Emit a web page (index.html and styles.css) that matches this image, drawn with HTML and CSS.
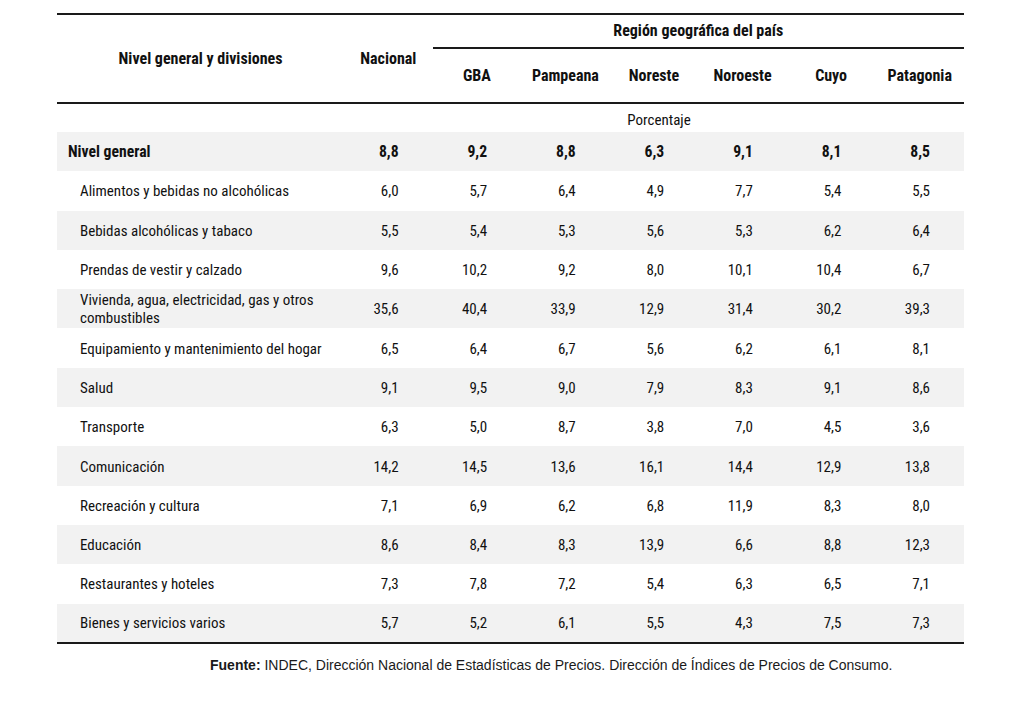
FILE: index.html
```html
<!DOCTYPE html>
<html lang="es">
<head>
<meta charset="utf-8">
<title>Ponderaciones por región</title>
<link rel="stylesheet" href="styles.css">
</head>
<body>
<main class="page">
  <table class="tbl">
    <colgroup>
      <col class="c-label">
      <col class="c-num"><col class="c-num"><col class="c-num"><col class="c-num">
      <col class="c-num"><col class="c-num"><col class="c-num">
    </colgroup>
    <thead>
      <tr class="h1">
        <th rowspan="2" class="th-main">Nivel general y divisiones</th>
        <th rowspan="2" class="th-main">Nacional</th>
        <th colspan="6" class="th-region">Región geográfica del país</th>
      </tr>
      <tr class="h2">
        <th>GBA</th><th>Pampeana</th><th>Noreste</th><th>Noroeste</th><th>Cuyo</th><th>Patagonia</th>
      </tr>
    </thead>
    <tbody>
      <tr class="unit"><td></td><td colspan="7" class="unit-cell">Porcentaje</td></tr>
      <tr class="row alt total"><td class="lbl lbl-top">Nivel general</td><td>8,8</td><td>9,2</td><td>8,8</td><td>6,3</td><td>9,1</td><td>8,1</td><td>8,5</td></tr>
      <tr class="row"><td class="lbl">Alimentos y bebidas no alcohólicas</td><td>6,0</td><td>5,7</td><td>6,4</td><td>4,9</td><td>7,7</td><td>5,4</td><td>5,5</td></tr>
      <tr class="row alt"><td class="lbl">Bebidas alcohólicas y tabaco</td><td>5,5</td><td>5,4</td><td>5,3</td><td>5,6</td><td>5,3</td><td>6,2</td><td>6,4</td></tr>
      <tr class="row"><td class="lbl">Prendas de vestir y calzado</td><td>9,6</td><td>10,2</td><td>9,2</td><td>8,0</td><td>10,1</td><td>10,4</td><td>6,7</td></tr>
      <tr class="row alt"><td class="lbl">Vivienda, agua, electricidad, gas y otros combustibles</td><td>35,6</td><td>40,4</td><td>33,9</td><td>12,9</td><td>31,4</td><td>30,2</td><td>39,3</td></tr>
      <tr class="row"><td class="lbl">Equipamiento y mantenimiento del hogar</td><td>6,5</td><td>6,4</td><td>6,7</td><td>5,6</td><td>6,2</td><td>6,1</td><td>8,1</td></tr>
      <tr class="row alt"><td class="lbl">Salud</td><td>9,1</td><td>9,5</td><td>9,0</td><td>7,9</td><td>8,3</td><td>9,1</td><td>8,6</td></tr>
      <tr class="row"><td class="lbl">Transporte</td><td>6,3</td><td>5,0</td><td>8,7</td><td>3,8</td><td>7,0</td><td>4,5</td><td>3,6</td></tr>
      <tr class="row alt"><td class="lbl">Comunicación</td><td>14,2</td><td>14,5</td><td>13,6</td><td>16,1</td><td>14,4</td><td>12,9</td><td>13,8</td></tr>
      <tr class="row"><td class="lbl">Recreación y cultura</td><td>7,1</td><td>6,9</td><td>6,2</td><td>6,8</td><td>11,9</td><td>8,3</td><td>8,0</td></tr>
      <tr class="row alt"><td class="lbl">Educación</td><td>8,6</td><td>8,4</td><td>8,3</td><td>13,9</td><td>6,6</td><td>8,8</td><td>12,3</td></tr>
      <tr class="row"><td class="lbl">Restaurantes y hoteles</td><td>7,3</td><td>7,8</td><td>7,2</td><td>5,4</td><td>6,3</td><td>6,5</td><td>7,1</td></tr>
      <tr class="row alt last"><td class="lbl">Bienes y servicios varios</td><td>5,7</td><td>5,2</td><td>6,1</td><td>5,5</td><td>4,3</td><td>7,5</td><td>7,3</td></tr>
    </tbody>
  </table>
  <p class="source"><strong>Fuente:</strong> INDEC, Dirección Nacional de Estadísticas de Precios. Dirección de Índices de Precios de Consumo.</p>
</main>
</body>
</html>
```
FILE: styles.css
```css
html, body {
  margin: 0;
  padding: 0;
  background: #ffffff;
}

.page {
  padding: 13px 0 0 57px;
}

.tbl {
  width: 907px;
  table-layout: fixed;
  border-collapse: collapse;
  font-family: "Roboto Condensed", "Liberation Sans", sans-serif;
  font-size: 15px;
  color: #111111;
}

.c-label { width: 287px; }
.c-num { width: 88.57px; }

.tbl thead {
  border-top: 2px solid #1a1a1a;
  border-bottom: 2px solid #1a1a1a;
}

.tbl th {
  font-weight: 700;
  font-size: 16px;
  text-align: center;
  padding: 0;
  line-height: 18px;
}

.h1 { height: 34px; }
.h2 { height: 55px; }

.th-main {
  vertical-align: middle;
}

.th-region {
  border-bottom: 2px solid #1a1a1a;
  padding-top: 2px;
}

.unit { height: 29px; }

.unit-cell {
  text-align: center;
  padding: 4px 0 0 10px;
  line-height: 18px;
}

.row { height: 39.3px; }

.row td {
  text-align: right;
  padding: 1px 34px 0 0;
  line-height: 18px;
  vertical-align: middle;
}

.row td.lbl {
  text-align: left;
  padding: 1px 16px 0 23px;
}

.row td.lbl-top {
  padding-left: 11px;
}

.alt { background: #f2f2f2; }

.total td {
  font-weight: 700;
  font-size: 15.7px;
}

.last { border-bottom: 2px solid #1a1a1a; }

.source {
  margin: 13px 0 0 153px;
  font-family: "Liberation Sans", Arial, sans-serif;
  font-size: 14px;
  color: #1a1a1a;
}

.source strong { font-weight: 700; }
```
